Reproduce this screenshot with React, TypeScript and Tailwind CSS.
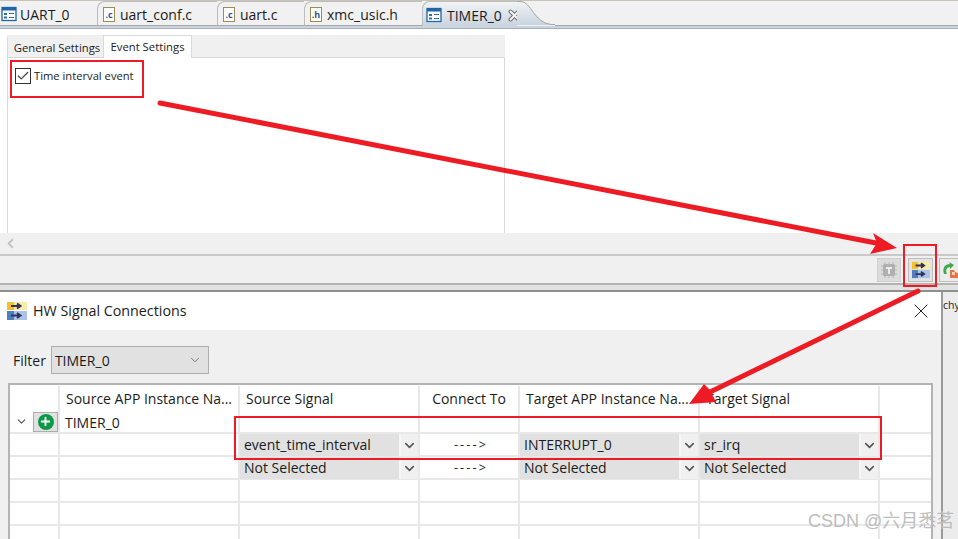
import { ChevronDown, ChevronLeft, Check, X, Plus } from 'lucide-react';

const font = { fontFamily: '"Open Sans", sans-serif' };

const tabs = [
  { label: 'UART_0', kind: 'app', width: 'w-[97px]' },
  { label: 'uart_conf.c', kind: 'c', width: 'w-[120px]' },
  { label: 'uart.c', kind: 'c', width: 'w-[87px]' },
  { label: 'xmc_usic.h', kind: 'h', width: 'w-[118px]' },
];

const AppIcon = () => (
  <svg width="16" height="16" viewBox="0 0 16 16" className="shrink-0">
    <rect x="1" y="1.500" width="14" height="13" fill="#fff" stroke="#1f66a8" strokeWidth="1.300" />
    <rect x="1" y="1.500" width="14" height="3" fill="#1f66a8" />
    <rect x="3" y="7" width="3" height="2" fill="#2f6ea8" />
    <rect x="8" y="7" width="5" height="1" fill="#2f6ea8" />
    <rect x="3" y="10.500" width="3" height="2" fill="#2f6ea8" />
    <rect x="8" y="11" width="5" height="1" fill="#2f6ea8" />
  </svg>
);

const FileIcon = ({ letter }: { letter: string }) => (
  <span className="flex h-[15px] w-[12px] shrink-0 items-center justify-center border border-[#a08a55] bg-white text-[9px] font-bold leading-none text-[#34558b]">
    .{letter}
  </span>
);

const SignalIcon = ({ size }: { size: number }) => (
  <svg width={size} height={size} viewBox="0 0 20 20" className="shrink-0">
    <rect x="0" y="1" width="7" height="8" fill="#f5c02a" />
    <rect x="7" y="1" width="13" height="8" fill="#f7eda6" />
    <rect x="0" y="10" width="7" height="9" fill="#4f7fc0" />
    <rect x="7" y="10" width="13" height="9" fill="#a9c4e8" />
    <path d="M4 5h8M10 2.500l3.500 2.500-3.500 2.500M4 14.500h8M10 12l3.500 2.500-3.500 2.500" fill="none" stroke="#33335a" strokeWidth="2" />
  </svg>
);

const ChipIcon = () => (
  <svg width="18" height="18" viewBox="0 0 18 18" className="shrink-0">
    <path d="M5 1v16M9 1v16M13 1v16M1 5h16M1 9h16M1 13h16" stroke="#b8b8b8" strokeWidth="1" />
    <rect x="3" y="3" width="12" height="12" rx="1.500" fill="#b0b0b0" />
    <path d="M6 6h6v2H10v5H8V8H6z" fill="#ececec" />
  </svg>
);

const CloseGlyph = () => (
  <svg width="13" height="13" viewBox="0 0 13 13" className="ml-[1px] shrink-0">
    <path d="M2.500 2.500l8 8M10.500 2.500l-8 8" stroke="#6f6f6f" strokeWidth="4" strokeLinecap="round" />
    <path d="M2.500 2.500l8 8M10.500 2.500l-8 8" stroke="#f4f4f4" strokeWidth="2" strokeLinecap="round" />
  </svg>
);

const Cell = ({ children, className = '' }: { children?: React.ReactNode; className?: string }) => (
  <div className={`flex min-w-0 items-center border-r-2 border-b-2 border-[#e8e8e8] ${className}`}>
    {children}
  </div>
);

const SelectCell = ({ value }: { value: string }) => (
  <div className="flex h-full min-w-0 items-stretch border-r-2 border-b border-[#e8e8e8]">
    <div className="flex flex-1 items-center bg-[#e1e1e1] pb-[2px] pl-[4px]">{value}</div>
    <div className="flex w-[19px] items-center justify-center border-l-2 border-[#f6f6f6] bg-[#f0f0f0]">
      <ChevronDown size={15} strokeWidth={2.500} color="#555" />
    </div>
  </div>
);

const HeaderCell = ({ children, center }: { children?: React.ReactNode; center?: boolean }) => (
  <div className={`flex items-center whitespace-nowrap border-r-2 border-[#e8e8e8] px-[6px] ${center ? 'justify-center' : ''}`}>
    {children}
  </div>
);

const SignalRow = ({ source, target, signal }: { source: string; target: string; signal: string }) => (
  <>
    <Cell />
    <Cell />
    <SelectCell value={source} />
    <Cell className="justify-center pl-[4px] pt-[1px] text-[12.500px] tracking-[2.200px]">----&gt;</Cell>
    <SelectCell value={target} />
    <SelectCell value={signal} />
    <div className="border-b-2 border-[#e8e8e8]" />
  </>
);

const EmptyRow = () => (
  <>
    <Cell />
    <Cell />
    <Cell />
    <Cell />
    <Cell />
    <Cell />
    <div className="border-b-2 border-[#e8e8e8]" />
  </>
);

export default function App() {
  return (
    <div className="relative flex h-[539px] w-[958px] flex-col overflow-hidden bg-white text-[14px] text-[#1c1c1c]" style={font}>
      {/* editor tabs */}
      <div className="flex h-[29px] shrink-0 flex-col border-b border-[#a8b0ba] border-t border-t-[#c9c4b8] bg-[#c9d4df]">
        <div className="flex flex-1 items-stretch bg-[#f1f1f1]">
          {tabs.map((t, i) => (
            <div
              key={t.label}
              className={`flex items-center border-b border-[#a6a6a6] pt-[2px] ${t.width} ${
                i === 0 ? 'gap-[3px] pl-[1px]' : 'gap-[5px] rounded-tl-[8px] border-l border-t border-l-[#bdbdbd] border-t-[#bdbdbd] pl-[5px]'
              }`}
            >
              {t.kind === 'app' ? <AppIcon /> : <FileIcon letter={t.kind} />}
              <span>{t.label}</span>
            </div>
          ))}
          <div className="flex w-[95px] items-center gap-[5px] rounded-tl-[8px] border-l border-t border-[#bdbdbd] bg-gradient-to-b from-[#f2f4f6] to-[#c9d4df] pl-[3px] pt-[2px]">
            <AppIcon />
            <span>TIMER_0</span>
            <CloseGlyph />
          </div>
          <svg width="38" height="24" viewBox="0 0 38 24" className="shrink-0" preserveAspectRatio="none">
            <defs>
              <linearGradient id="tabFill" x1="0" y1="0" x2="0" y2="1">
                <stop offset="0" stopColor="#f2f4f6" />
                <stop offset="1" stopColor="#c9d4df" />
              </linearGradient>
            </defs>
            <path d="M0 0H4C14 0 17 21 34 23H38V24H0z" fill="url(#tabFill)" />
            <path d="M0 0.500H4C14 0.500 17 22 34 23.500H38" fill="none" stroke="#a6a6a6" />
          </svg>
          <div className="flex-1 border-b border-[#a6a6a6]" />
        </div>
        <div className="h-[3px] shrink-0" />
      </div>

      {/* editor */}
      <div className="flex h-[204px] shrink-0 bg-white pl-[7px] pt-[6px]">
        <div className="flex h-[198px] w-[498px] flex-col bg-[#f0f0f0]">
          <div className="flex h-[22px] shrink-0 items-end text-[11.300px]">
            <div className="flex h-[20px] w-[96px] items-center justify-center border-l border-[#d9d9d9] pl-[3px] pt-[2px]">General Settings</div>
            <div className="z-10 -mb-px flex h-[23px] w-[89px] items-start justify-center border border-b-0 border-[#d9d9d9] bg-white pt-[3px]">Event Settings</div>
          </div>
          <div className="flex-1 border border-b-0 border-[#d9d9d9] bg-white pl-[7px] pt-[10px]">
            <label className="flex items-center gap-[3px] text-[11.200px]">
              <span className="flex h-[16px] w-[16px] items-center justify-center border border-[#333] bg-white">
                <Check size={14} strokeWidth={2.200} color="#444" />
              </span>
              Time interval event
            </label>
          </div>
        </div>
      </div>

      {/* scroll strip */}
      <div className="flex h-[21px] shrink-0 items-center bg-[#f0f0f0] pl-[3px]">
        <ChevronLeft size={15} strokeWidth={3} color="#c4c4c4" />
      </div>

      {/* view toolbar */}
      <div className="flex h-[29px] shrink-0 items-start justify-end border-t-2 border-[#c9c9c9] bg-[#f0f0f0] pt-[2px]">
        <div className="flex h-[24px] w-[24px] items-center justify-center border border-[#d0d0d0] bg-[#dcdcdc]">
          <ChipIcon />
        </div>
        <div className="ml-[7px] flex h-[24px] w-[25px] items-center justify-center border border-[#bdbdbd] bg-[#e4e4e4]">
          <SignalIcon size={18} />
        </div>
        <div className="-mr-[6px] ml-[6px] flex h-[24px] w-[25px] items-center justify-start overflow-hidden border border-[#bdbdbd] bg-[#ececec] pl-[2px]">
          <svg width="18" height="18" viewBox="0 0 18 18" className="shrink-0">
            <path d="M2 13C0 7 3 3 8 3L7 1l5 3-4 4V6C5 6 3 9 5 13z" fill="#3fa84a" />
            <path d="M8 9h4l1 2 3 1v5H8z" fill="#e2744a" />
            <path d="M10 11h3v3h-3z" fill="#f5d0b0" />
          </svg>
        </div>
      </div>

      <div className="h-[9px] shrink-0 border-y-2 border-t-[#b4b4b4] border-b-[#8f8f8f] bg-[#e2e2e2]" />

      {/* dialog */}
      <div className="flex min-h-0 flex-1">
        <div className="z-10 flex w-[943px] shrink-0 flex-col border-r-2 border-[#9a9a9a] bg-[#f0f0f0]">
          <div className="flex h-[38px] shrink-0 items-center gap-[6px] bg-white pl-[7px] pr-[8px]">
            <SignalIcon size={20} />
            <span className="flex-1 text-[14.300px]">HW Signal Connections</span>
            <X size={24} strokeWidth={1} color="#222" />
          </div>
          <div className="flex h-[53px] shrink-0 items-center gap-[5px] pl-[13px] pt-[7px]">
            <span>Filter</span>
            <div className="flex h-[28px] w-[158px] items-center justify-between border border-[#adadad] bg-[#e1e1e1] pl-[3px] pr-[6px]">
              TIMER_0
              <ChevronDown size={14} strokeWidth={1.300} color="#555" />
            </div>
          </div>
          <div className="ml-[8px] w-[925px] flex-1 border-2 border-b-0 border-[#b4b4b4] bg-white pt-[1px]">
            <div className="grid h-full grid-cols-[50px_180px_180px_100px_180px_180px_1fr] grid-rows-[25px_23px_23px_23px_23px_23px_23px]">
              <HeaderCell />
              <HeaderCell>Source APP Instance Na...</HeaderCell>
              <HeaderCell>Source Signal</HeaderCell>
              <HeaderCell center>Connect To</HeaderCell>
              <HeaderCell>Target APP Instance Na...</HeaderCell>
              <HeaderCell>Target Signal</HeaderCell>
              <div />

              <Cell className="justify-end gap-[5px]">
                <ChevronDown size={13} strokeWidth={2} color="#555" />
                <span className="flex h-[20px] w-[25px] items-center justify-center border border-[#adadad] bg-[#e1e1e1]">
                  <span className="flex h-[16px] w-[16px] items-center justify-center rounded-full bg-[#0a9a46]">
                    <Plus size={13} strokeWidth={3.500} color="#fff" />
                  </span>
                </span>
              </Cell>
              <Cell className="pl-[5px] pt-[1px]">TIMER_0</Cell>
              <Cell />
              <Cell />
              <Cell />
              <Cell />
              <div className="border-b-2 border-[#e8e8e8]" />

              <SignalRow source="event_time_interval" target="INTERRUPT_0" signal="sr_irq" />
              <SignalRow source="Not Selected" target="Not Selected" signal="Not Selected" />
              <EmptyRow />
              <EmptyRow />
              <EmptyRow />
            </div>
          </div>
        </div>
        <div className="min-w-0 flex-1 bg-[#ececec] pt-[3px]">
          <div className="whitespace-nowrap text-[10.500px] leading-[20px]">chy</div>
        </div>
      </div>

      {/* red annotations drawn on top of the screenshot */}
      <div className="absolute left-[10px] top-[60px] z-20 h-[38px] w-[134px] border-2 border-[#ed1c24]" />
      <div className="absolute left-[903px] top-[244px] z-20 h-[43px] w-[34px] border-2 border-[#ed1c24]" />
      <div className="absolute left-[234px] top-[416px] z-20 h-[44px] w-[648px] border-2 border-[#ed1c24]" />
      <svg className="absolute left-0 top-0 z-20" width="958" height="539" viewBox="0 0 958 539" fill="none">
        <path d="M160 103L876 243" stroke="#ed1c24" strokeWidth="5" strokeLinecap="round" />
        <path d="M897 248L873 233L877 243L870 254z" fill="#ed1c24" />
        <path d="M918 291L708 393" stroke="#ed1c24" strokeWidth="5" strokeLinecap="round" />
        <path d="M689 404L704 384L710 390L716 402z" fill="#ed1c24" />
      </svg>

      {/* CSDN watermark */}
      <div className="absolute left-[808px] top-[509px] z-20 text-[18px] leading-[24px] text-[#bdbdbd]" style={{ fontFamily: '"Liberation Sans", "Noto Sans CJK SC", sans-serif' }}>
        CSDN @六月悉茗
      </div>
    </div>
  );
}
